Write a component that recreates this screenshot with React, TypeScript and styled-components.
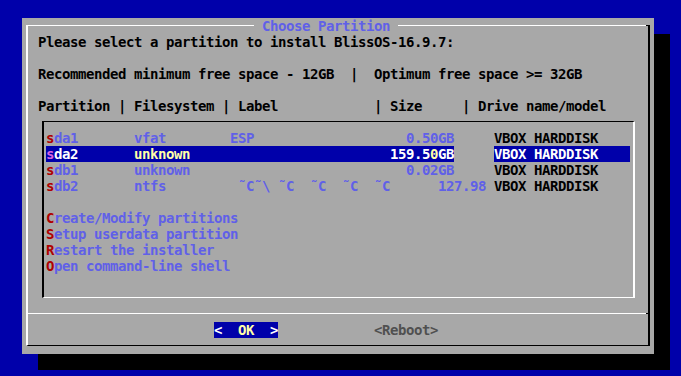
import React from "react";
import styled, { createGlobalStyle, css } from "styled-components";

const C = {
  screen: "#0000aa",
  panel: "#a8a8a8",
  white: "#ffffff",
  black: "#000000",
  item: "#6060e8",
  key: "#b00000",
  selBg: "#0000aa",
  selText: "#ffffff",
  selHi: "#ffffa8",
  selKey: "#d862e0",
  dim: "#505050",
};

const Global = createGlobalStyle`
  html, body { margin: 0; padding: 0; background: ${C.screen}; overflow: hidden; }
  #root { width: 681px; height: 376px; }
`;

const Screen = styled.main`
  width: 681px;
  height: 376px;
  box-sizing: border-box;
  padding: 18px 0 0 22px;
  background: ${C.screen};
  font-family: "DejaVu Sans Mono", "Liberation Mono", monospace;
  font-weight: 700;
  font-size: 14px;
  line-height: 16px;
  letter-spacing: -0.43px;
  color: ${C.black};
`;

const Dialog = styled.section`
  width: 632px;
  height: 336px;
  box-sizing: border-box;
  background: ${C.panel};
  box-shadow: 16px 16px 0 ${C.black};
  padding: 0 4px 8px;
  display: flex;
  flex-direction: column;
`;

const TitleRow = styled.header`
  display: flex;
  height: 16px;
`;

const Rule = styled.div<{ $side: "left" | "right" }>`
  box-sizing: border-box;
  margin-top: 7px;
  height: 9px;
  ${({ $side }) =>
    $side === "left"
      ? css`
          width: 228px;
          border-top: 1px solid ${C.white};
          border-left: 2px solid ${C.white};
        `
      : css`
          flex: 1;
          border-right: 2px solid ${C.black};
          background: linear-gradient(to right, ${C.white} calc(100% - 2px), ${C.black} 0) top left / 100% 1px no-repeat;
        `}
`;

const Title = styled.h1`
  margin: 0;
  padding: 0 8px;
  font: inherit;
  color: ${C.item};
  white-space: pre;
`;

const Body = styled.div`
  display: flex;
  flex-direction: column;
  border-left: 2px solid ${C.white};
  border-right: 2px solid ${C.black};
  border-bottom: 1px solid ${C.black};
  padding-bottom: 7px;
`;

const TextLine = styled.p<{ $gap?: boolean }>`
  margin: ${({ $gap }) => ($gap ? "16px" : "0")} 0 0;
  padding-left: 10px;
  height: 16px;
  white-space: pre;
`;

const ListBox = styled.div`
  margin: 7px 13px 0 14px;
  padding: 8px 0 23px 2px;
  border-top: 1px solid ${C.black};
  border-left: 2px solid ${C.black};
  border-right: 2px solid ${C.white};
  border-bottom: 1px solid ${C.white};
  display: flex;
  flex-direction: column;
`;

const Row = styled.div<{ $gap?: boolean }>`
  height: 16px;
  margin-top: ${({ $gap }) => ($gap ? "16px" : "0")};
  white-space: pre;
`;

type Tone = "item" | "key" | "plain" | "sel" | "selHi" | "selKey";

const toneStyle: Record<Tone, ReturnType<typeof css>> = {
  item: css`color: ${C.item};`,
  key: css`color: ${C.key};`,
  plain: css`color: ${C.black};`,
  sel: css`color: ${C.selText}; background: ${C.selBg};`,
  selHi: css`color: ${C.selHi}; background: ${C.selBg};`,
  selKey: css`color: ${C.selKey}; background: ${C.selBg};`,
};

const Seg = styled.span<{ $tone: Tone }>`
  ${({ $tone }) => toneStyle[$tone]}
`;

const Separator = styled.hr`
  margin: 15px 0 0;
  border: 0;
  height: 1px;
  background: linear-gradient(to right, ${C.white} calc(100% - 2px), ${C.black} 0);
`;

const ButtonRow = styled.div`
  display: flex;
  gap: 96px;
  margin-top: 8px;
  padding-left: 186px;
  height: 16px;
`;

const Button = styled.span<{ $active?: boolean }>`
  white-space: pre;
  ${({ $active }) =>
    $active
      ? css`
          background: ${C.selBg};
          color: ${C.white};
        `
      : css`
          color: ${C.dim};
        `}
`;

const ButtonLabel = styled.span`
  color: ${C.selHi};
`;

/* place texts at absolute text-mode columns, starting from column `start` */
const lay = (start: number, items: [number, string][], end?: number) => {
  let s = "";
  for (const [c, t] of items) s = s.padEnd(c - start) + t;
  return end ? s.padEnd(end - start) : s;
};

type Part = [Tone, string];

const MODEL = "VBOX HARDDISK";

const partitions: Part[][] = [
  [
    ["key", "s"],
    ["item", lay(6, [[6, "da1"], [16, "vfat"], [28, "ESP"], [50, "0.50GB"]], 61)],
    ["plain", MODEL],
  ],
  [
    ["selKey", "s"],
    ["sel", lay(6, [[6, "da2"]], 16)],
    ["selHi", "unknown"],
    ["sel", lay(23, [[48, "159.5"]])],
    ["selHi", "0"],
    ["sel", "GB"],
    ["plain", "     "],
    ["sel", MODEL.padEnd(17)],
  ],
  [
    ["key", "s"],
    ["item", lay(6, [[6, "db1"], [16, "unknown"], [50, "0.02GB"]], 61)],
    ["plain", MODEL],
  ],
  [
    ["key", "s"],
    [
      "item",
      lay(
        6,
        [
          [6, "db2"],
          [16, "ntfs"],
          [29, "˜C˜\\"],
          [34, "˜C"],
          [38, "˜C"],
          [42, "˜C"],
          [46, "˜C"],
          [54, "127.98"],
        ],
        61
      ),
    ],
    ["plain", MODEL],
  ],
];

const actions = [
  "Create/Modify partitions",
  "Setup userdata partition",
  "Restart the installer",
  "Open command-line shell",
];

const header = lay(4, [
  [4, "Partition"],
  [14, "|"],
  [16, "Filesystem"],
  [27, "|"],
  [29, "Label"],
  [46, "|"],
  [48, "Size"],
  [57, "|"],
  [59, "Drive name/model"],
]);

export default function App() {
  return (
    <>
      <Global />
      <Screen>
        <Dialog>
          <TitleRow>
            <Rule $side="left" />
            <Title>Choose Partition</Title>
            <Rule $side="right" />
          </TitleRow>
          <Body>
            <TextLine>Please select a partition to install BlissOS-16.9.7:</TextLine>
            <TextLine $gap>Recommended minimum free space - 12GB  |  Optimum free space &gt;= 32GB</TextLine>
            <TextLine $gap>{header}</TextLine>
            <ListBox>
              {partitions.map((parts, i) => (
                <Row key={i}>
                  {parts.map(([tone, text], j) => (
                    <Seg key={j} $tone={tone}>
                      {text}
                    </Seg>
                  ))}
                </Row>
              ))}
              {actions.map((a, i) => (
                <Row key={a} $gap={i === 0}>
                  <Seg $tone="key">{a[0]}</Seg>
                  <Seg $tone="item">{a.slice(1)}</Seg>
                </Row>
              ))}
            </ListBox>
            <Separator />
            <ButtonRow>
              <Button $active>
                {"<  "}
                <ButtonLabel>OK</ButtonLabel>
                {"  >"}
              </Button>
              <Button>{"<Reboot>"}</Button>
            </ButtonRow>
          </Body>
        </Dialog>
      </Screen>
    </>
  );
}
